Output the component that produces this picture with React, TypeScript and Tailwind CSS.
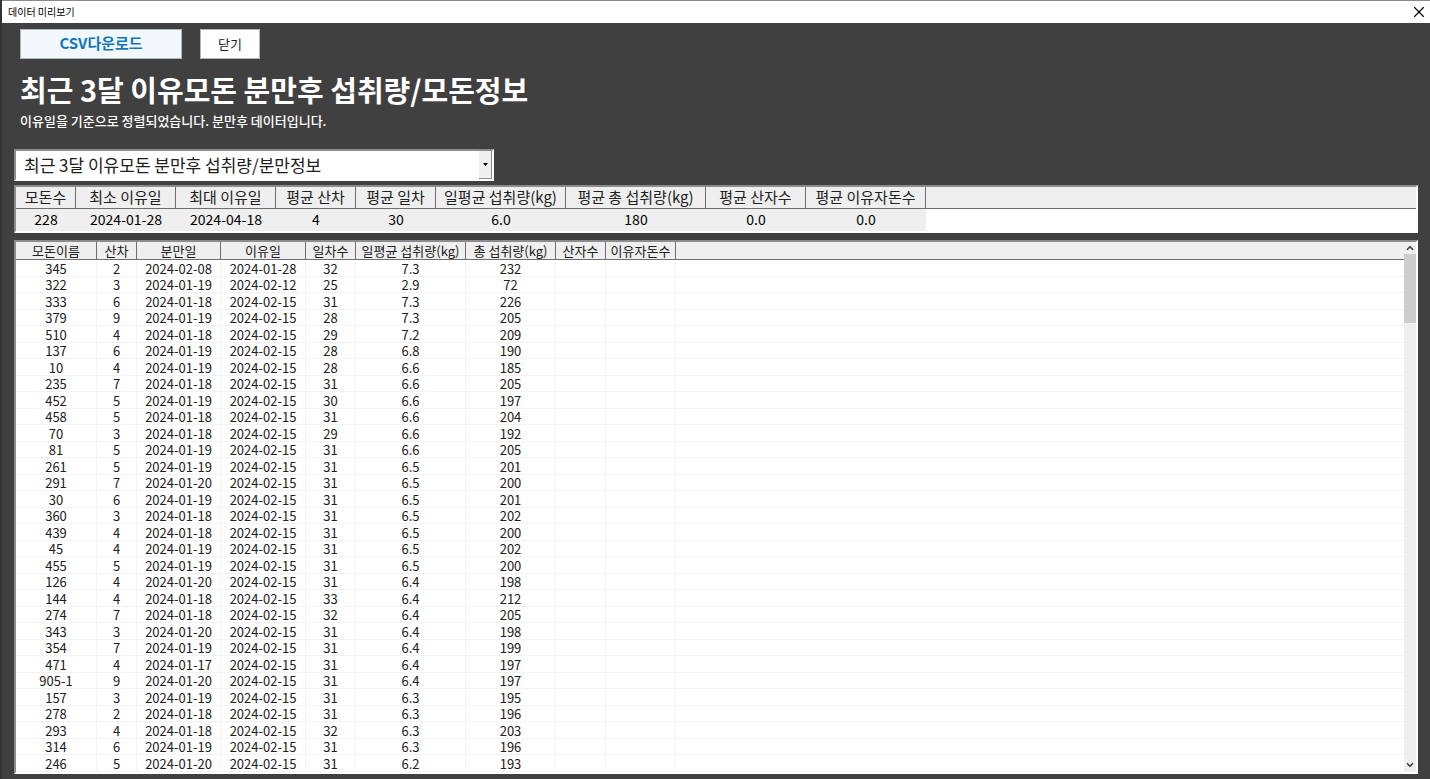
import { ChevronDown, ChevronUp, X } from "lucide-react";

const summaryColumns = [
  { title: "모돈수", value: "228", width: "w-[60px]" },
  { title: "최소 이유일", value: "2024-01-28", width: "w-[100px]" },
  { title: "최대 이유일", value: "2024-04-18", width: "w-[100px]" },
  { title: "평균 산차", value: "4", width: "w-[80px]" },
  { title: "평균 일차", value: "30", width: "w-[80px]" },
  { title: "일평균 섭취량(kg)", value: "6.0", width: "w-[130px]" },
  { title: "평균 총 섭취량(kg)", value: "180", width: "w-[140px]" },
  { title: "평균 산자수", value: "0.0", width: "w-[100px]" },
  { title: "평균 이유자돈수", value: "0.0", width: "w-[120px]" },
];

const detailColumns = [
  { title: "모돈이름", width: "w-[81px]" },
  { title: "산차", width: "w-[40px]" },
  { title: "분만일", width: "w-[84px]" },
  { title: "이유일", width: "w-[85px]" },
  { title: "일차수", width: "w-[50px]" },
  { title: "일평균 섭취량(kg)", width: "w-[110px]" },
  { title: "총 섭취량(kg)", width: "w-[90px]" },
  { title: "산자수", width: "w-[50px]" },
  { title: "이유자돈수", width: "w-[70px]" },
];

const sows = [
  ["345", "2", "2024-02-08", "2024-01-28", "32", "7.3", "232"],
  ["322", "3", "2024-01-19", "2024-02-12", "25", "2.9", "72"],
  ["333", "6", "2024-01-18", "2024-02-15", "31", "7.3", "226"],
  ["379", "9", "2024-01-19", "2024-02-15", "28", "7.3", "205"],
  ["510", "4", "2024-01-18", "2024-02-15", "29", "7.2", "209"],
  ["137", "6", "2024-01-19", "2024-02-15", "28", "6.8", "190"],
  ["10", "4", "2024-01-19", "2024-02-15", "28", "6.6", "185"],
  ["235", "7", "2024-01-18", "2024-02-15", "31", "6.6", "205"],
  ["452", "5", "2024-01-19", "2024-02-15", "30", "6.6", "197"],
  ["458", "5", "2024-01-18", "2024-02-15", "31", "6.6", "204"],
  ["70", "3", "2024-01-18", "2024-02-15", "29", "6.6", "192"],
  ["81", "5", "2024-01-19", "2024-02-15", "31", "6.6", "205"],
  ["261", "5", "2024-01-19", "2024-02-15", "31", "6.5", "201"],
  ["291", "7", "2024-01-20", "2024-02-15", "31", "6.5", "200"],
  ["30", "6", "2024-01-19", "2024-02-15", "31", "6.5", "201"],
  ["360", "3", "2024-01-18", "2024-02-15", "31", "6.5", "202"],
  ["439", "4", "2024-01-18", "2024-02-15", "31", "6.5", "200"],
  ["45", "4", "2024-01-19", "2024-02-15", "31", "6.5", "202"],
  ["455", "5", "2024-01-19", "2024-02-15", "31", "6.5", "200"],
  ["126", "4", "2024-01-20", "2024-02-15", "31", "6.4", "198"],
  ["144", "4", "2024-01-18", "2024-02-15", "33", "6.4", "212"],
  ["274", "7", "2024-01-18", "2024-02-15", "32", "6.4", "205"],
  ["343", "3", "2024-01-20", "2024-02-15", "31", "6.4", "198"],
  ["354", "7", "2024-01-19", "2024-02-15", "31", "6.4", "199"],
  ["471", "4", "2024-01-17", "2024-02-15", "31", "6.4", "197"],
  ["905-1", "9", "2024-01-20", "2024-02-15", "31", "6.4", "197"],
  ["157", "3", "2024-01-19", "2024-02-15", "31", "6.3", "195"],
  ["278", "2", "2024-01-18", "2024-02-15", "31", "6.3", "196"],
  ["293", "4", "2024-01-18", "2024-02-15", "32", "6.3", "203"],
  ["314", "6", "2024-01-19", "2024-02-15", "31", "6.3", "196"],
  ["246", "5", "2024-01-20", "2024-02-15", "31", "6.2", "193"],
];

function TitleBar() {
  return (
    <header className="flex justify-between items-center bg-white pr-[2px] pl-[6px] border-t border-t-[#8a8a8a] h-[23px]">
      <p className="text-[10px] text-black leading-4">데이터 미리보기</p>
      <button type="button" aria-label="창 닫기" className="text-black">
        <X size={18} strokeWidth={1.5} />
      </button>
    </header>
  );
}

function SummaryTable() {
  return (
    <div className="bg-white mt-[4px] border-2 border-t-[#8c8c8c] border-r-white border-b-white border-l-[#8c8c8c]">
      <table className="w-full text-black border-separate border-spacing-0 table-fixed">
        <thead>
          <tr className="bg-[#efefef] h-[22px] text-[15px] text-[#202020] leading-[18px]">
            {summaryColumns.map((column) => (
              <th
                key={column.title}
                className={`${column.width} p-0 pb-[2px] border-r border-b border-[#6e6e6e] font-normal whitespace-nowrap`}
              >
                {column.title}
              </th>
            ))}
            <th className="p-0 border-b border-b-[#6e6e6e]" />
          </tr>
        </thead>
        <tbody>
          <tr className="h-[22px] text-[14px] text-center leading-[18px]">
            {summaryColumns.map((column) => (
              <td key={column.title} className="bg-[#efefef] p-0 pb-[2px]">
                {column.value}
              </td>
            ))}
            <td className="p-0" />
          </tr>
        </tbody>
      </table>
    </div>
  );
}

function ScrollBar() {
  return (
    <div className="flex flex-col items-center bg-[#efefef] w-[12px] shrink-0">
      <ChevronUp className="my-px text-[#404040]" size={10} strokeWidth={4} />
      <div className="bg-[#cdcdcd] w-full h-[69px]" />
      <ChevronDown className="mt-auto mb-[2px] text-[#404040]" size={10} strokeWidth={4} />
    </div>
  );
}

function DetailTable() {
  return (
    <div className="flex bg-white mt-[7px] border-2 border-t-[#8c8c8c] border-r-white border-b-white border-l-[#8c8c8c]">
      <table className="flex-1 w-full min-w-0 text-[13px] text-[#202020] text-center border-separate border-spacing-0 table-fixed">
        <thead>
          <tr className="bg-[#efefef] h-[18px] leading-4">
            {detailColumns.map((column) => (
              <th
                key={column.title}
                className={`${column.width} p-0 border-r border-b border-[#6e6e6e] font-normal whitespace-nowrap`}
              >
                {column.title}
              </th>
            ))}
            <th className="p-0 border-b border-b-[#6e6e6e]" />
          </tr>
        </thead>
        <tbody>
          {sows.map((sow) => (
            <tr key={sow[0]} className="odd:h-[17px] even:h-[16px] leading-[15px]">
              {detailColumns.map((column, index) => (
                <td key={column.title} className="p-0 border-r border-b border-[#f3f3f3]">
                  {sow[index]}
                </td>
              ))}
              <td className="p-0 border-b border-b-[#f3f3f3]" />
            </tr>
          ))}
        </tbody>
      </table>
      <ScrollBar />
    </div>
  );
}

export default function App() {
  return (
    <div className="bg-[#404040] border-l-2 border-l-[#333333] min-h-screen font-['Noto_Sans_CJK_KR',sans-serif]">
      <TitleBar />
      <main className="pt-[6px] pr-3 pb-[5px] pl-3">
        <div className="flex gap-[18px] px-[6px]">
          <button
            type="button"
            className="bg-[#f3f8ff] pb-[2px] border border-[#b4b4b4] w-[162px] h-[30px] font-bold text-[#1177bb] text-[15px] leading-5"
          >
            CSV다운로드
          </button>
          <button
            type="button"
            className="bg-white border border-[#b4b4b4] w-[60px] h-[30px] text-[#202020] text-[13px] leading-5"
          >
            닫기
          </button>
        </div>
        <h1 className="mt-[10px] px-[6px] font-bold text-[29px] text-white leading-10">
          최근 3달 이유모돈 분만후 섭취량/모돈정보
        </h1>
        <p className="mt-[2px] px-[6px] font-medium text-[13px] text-white leading-5">
          이유일을 기준으로 정렬되었습니다. 분만후 데이터입니다.
        </p>
        <div className="relative mt-[18px] border-2 border-t-[#8c8c8c] border-r-white border-b-white border-l-[#8c8c8c] w-[480px] max-w-full">
          <select
            aria-label="데이터 종류"
            className="block bg-white pl-[8px] w-full h-[28px] text-[#202020] text-[17px] leading-6 appearance-none"
          >
            <option>최근 3달 이유모돈 분만후 섭취량/분만정보</option>
          </select>
          <span className="top-0 right-0 bottom-0 absolute flex justify-center items-center bg-[#efefef] border-r border-r-[#8c8c8c] border-b border-b-[#8c8c8c] w-[13px] pointer-events-none">
            <svg width="5" height="3" viewBox="0 0 5 3">
              <path d="M0 0h5L2.5 3z" fill="#000" />
            </svg>
          </span>
        </div>
        <SummaryTable />
        <DetailTable />
      </main>
    </div>
  );
}
